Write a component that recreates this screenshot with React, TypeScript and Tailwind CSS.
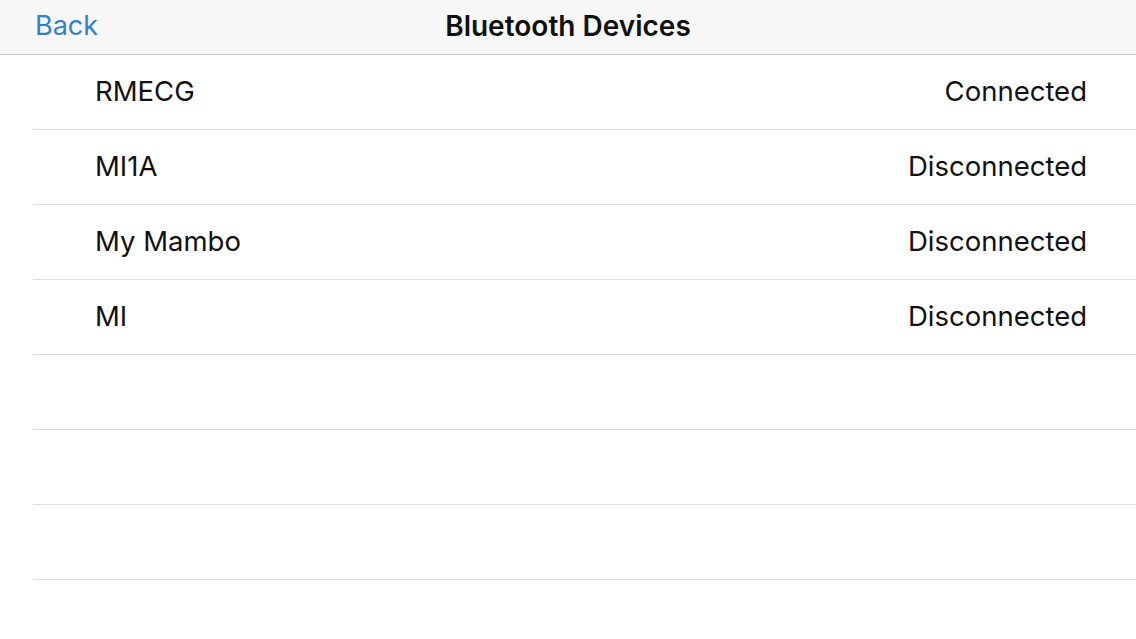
const devices = [
  { name: "RMECG", status: "Connected" },
  { name: "MI1A", status: "Disconnected" },
  { name: "My Mambo", status: "Disconnected" },
  { name: "MI", status: "Disconnected" },
];

export default function App() {
  return (
    <div
      className="w-[1136px] h-[639px] bg-white overflow-hidden"
      style={{ fontFamily: 'Inter, "Liberation Sans", Arial, sans-serif' }}
    >
      {/* Nav bar */}
      <div className="relative h-[55px] bg-[#f7f7f7] border-b border-[#c9c9cc] flex items-center justify-center">
        <button className="absolute left-[35px] top-[9px] text-[27px] leading-[34px] text-[#2f7fd4]">
          Back
        </button>
        <h1 className="text-[28px] font-semibold text-[#111] leading-[34px] -mt-[2px]">
          Bluetooth Devices
        </h1>
      </div>

      {/* Device list */}
      <div className="ml-[33px]">
        {devices.map((d) => (
          <div
            key={d.name}
            className="h-[75px] border-b border-[#dcdcdf] flex items-center justify-between pl-[62px] pr-[49px] text-[27.5px] text-[#111]"
          >
            <span>{d.name}</span>
            <span>{d.status}</span>
          </div>
        ))}
        {[0, 1, 2].map((i) => (
          <div key={i} className="h-[75px] border-b border-[#dcdcdf]" />
        ))}
      </div>
    </div>
  );
}
